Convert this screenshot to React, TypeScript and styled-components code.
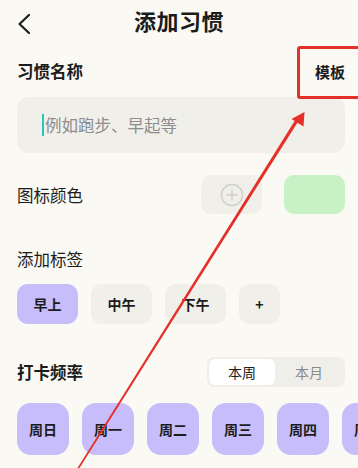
import React from "react";
import styled, { createGlobalStyle } from "styled-components";

const Global = createGlobalStyle`
  html, body { margin: 0; padding: 0; background: #faf9f4; }
  body { font-family: "Noto Sans CJK SC", "Noto Sans", sans-serif; color: #1c1c1c; }
  * { box-sizing: border-box; }
`;

const Page = styled.div`
  position: relative;
  width: 358px;
  height: 468px;
  overflow: hidden;
  background: #faf9f4;
  padding: 0 13px 0 17px;
`;

const Header = styled.div`
  height: 40px;
  display: grid;
  grid-template-columns: 40px 1fr 40px;
  align-items: center;
  margin-left: -17px;
  margin-right: -13px;
`;

const Back = styled.div`
  display: flex;
  align-items: flex-start;
  justify-content: flex-start;
  padding-left: 17px;
  padding-top: 13px;
  height: 40px;
`;

const Title = styled.div`
  text-align: center;
  font-size: 22px;
  font-weight: 700;
  line-height: 40px;
  letter-spacing: 0.5px;
`;

const Row = styled.div<{ $top: number; $h: number }>`
  margin-top: ${(p) => p.$top}px;
  height: ${(p) => p.$h}px;
  display: flex;
  align-items: center;
  justify-content: space-between;
`;

const Label = styled.div<{ $weight?: number }>`
  font-size: 16.5px;
  font-weight: ${(p) => p.$weight ?? 400};
  line-height: 24px;
`;

const TemplateLink = styled.div`
  font-size: 15px;
  font-weight: 700;
`;

const Input = styled.div`
  margin-top: 14px;
  height: 56px;
  border-radius: 12px;
  background: #f0efe9;
  display: flex;
  align-items: center;
  padding-left: 25px;
  font-size: 16.5px;
  color: #8d8d8d;
`;

const Caret = styled.span`
  display: inline-block;
  width: 2px;
  height: 22px;
  background: #2cc6b8;
  margin-right: 1px;
`;

const Swatches = styled.div`
  display: flex;
  gap: 22px;
`;

const Swatch = styled.div<{ $bg: string }>`
  width: 61px;
  height: 39px;
  border-radius: 10px;
  background: ${(p) => p.$bg};
  display: flex;
  align-items: center;
  justify-content: center;
`;

const Chips = styled.div<{ $top: number; $gap: number }>`
  margin-top: ${(p) => p.$top}px;
  display: flex;
  gap: ${(p) => p.$gap}px;
`;

const Chip = styled.div<{ $active?: boolean; $w: number; $h: number; $r: number }>`
  flex: 0 0 auto;
  width: ${(p) => p.$w}px;
  height: ${(p) => p.$h}px;
  border-radius: ${(p) => p.$r}px;
  background: ${(p) => (p.$active ? "#c6bdfa" : "#f0efe9")};
  display: flex;
  align-items: center;
  justify-content: center;
  font-size: 14px;
  font-weight: 700;
  color: #1c1c1c;
`;

const Segmented = styled.div`
  width: 138px;
  height: 30px;
  border-radius: 8px;
  background: #efeee8;
  padding: 2px;
  display: flex;
`;

const Seg = styled.div<{ $active?: boolean }>`
  height: 26px;
  border-radius: 6px;
  background: ${(p) => (p.$active ? "#ffffff" : "transparent")};
  color: ${(p) => (p.$active ? "#1c1c1c" : "#8a8a8a")};
  font-size: 14px;
  display: flex;
  align-items: center;
  justify-content: center;
  flex: ${(p) => (p.$active ? "0 0 66px" : "1")};
`;

const HighlightBox = styled.div`
  position: absolute;
  left: 297px;
  top: 46px;
  width: 72px;
  height: 53px;
  border: 3px solid #e5302a;
  border-radius: 3px;
  pointer-events: none;
`;

const ArrowLayer = styled.svg`
  position: absolute;
  left: 0;
  top: 0;
  pointer-events: none;
`;

export default function App() {
  const days = ["周日", "周一", "周二", "周三", "周四", "周五"];
  return (
    <>
      <Global />
      <Page>
        <Header>
          <Back>
            <svg width="14" height="22" viewBox="0 0 14 22">
              <polyline points="12,2 2.5,11 12,20" fill="none" stroke="#1c1c1c" strokeWidth="2.2" strokeLinecap="round" strokeLinejoin="round" />
            </svg>
          </Back>
          <Title>添加习惯</Title>
          <div />
        </Header>

        <Row $top={19} $h={24}>
          <Label $weight={600}>习惯名称</Label>
          <TemplateLink>模板</TemplateLink>
        </Row>

        <Input>
          <Caret />
          例如跑步、早起等
        </Input>

        <Row $top={22} $h={39}>
          <Label>图标颜色</Label>
          <Swatches>
            <Swatch $bg="#f0efe9">
              <svg width="24" height="24" viewBox="0 0 24 24">
                <circle cx="12" cy="12" r="10.5" fill="none" stroke="#cfcfcb" strokeWidth="1.4" />
                <path d="M12 6.5v11M6.5 12h11" stroke="#cfcfcb" strokeWidth="1.4" />
              </svg>
            </Swatch>
            <Swatch $bg="#c8f2c5" />
          </Swatches>
        </Row>

        <Row $top={33} $h={24}>
          <Label>添加标签</Label>
        </Row>

        <Chips $top={13} $gap={13}>
          <Chip $active $w={61} $h={40} $r={11}>早上</Chip>
          <Chip $w={61} $h={40} $r={11}>中午</Chip>
          <Chip $w={61} $h={40} $r={11}>下午</Chip>
          <Chip $w={41} $h={40} $r={11}>+</Chip>
        </Chips>

        <Row $top={33} $h={30}>
          <Label $weight={700}>打卡频率</Label>
          <Segmented>
            <Seg $active>本周</Seg>
            <Seg>本月</Seg>
          </Segmented>
        </Row>

        <Chips $top={16} $gap={13}>
          {days.map((d) => (
            <Chip key={d} $active $w={52} $h={52} $r={14}>{d}</Chip>
          ))}
        </Chips>

        <HighlightBox />
        <ArrowLayer width="358" height="468" viewBox="0 0 358 468">
          <polygon points="296.5,118 298.8,120.5 79.5,468 77.5,468" fill="#e5302a" />
          <polygon points="304.5,112 291.5,119 303.5,126.5" fill="#e5302a" />
        </ArrowLayer>
      </Page>
    </>
  );
}
